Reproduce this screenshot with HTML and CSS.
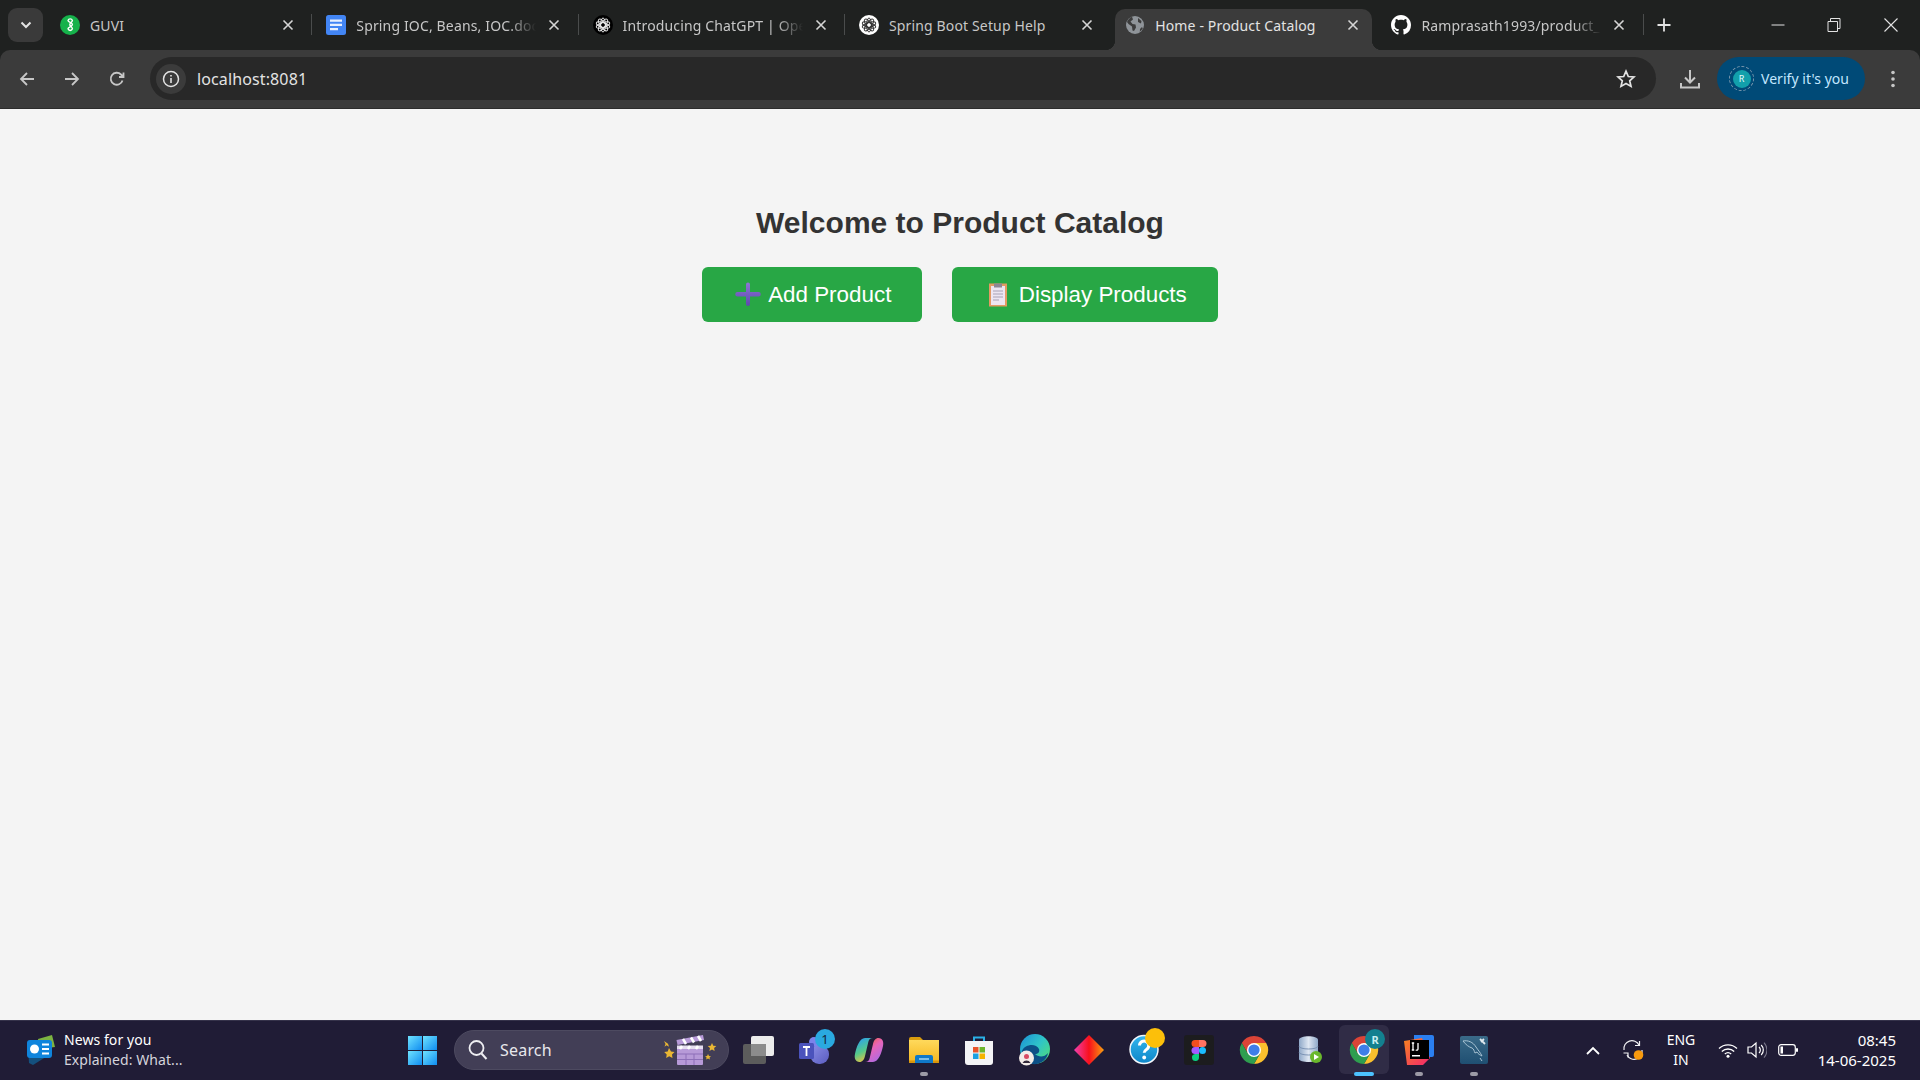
FILE: index.html
```html
<!DOCTYPE html>
<html lang="en">
<head>
<meta charset="utf-8">
<title>Home - Product Catalog</title>
<link rel="stylesheet" href="styles.css">
</head>
<body>
<svg class="defs" width="0" height="0" aria-hidden="true">
  <defs>
    <symbol id="x" viewBox="0 0 12 12"><path d="M1.500 1.500l9 9M10.500 1.500l-9 9" fill="none" stroke="currentColor" stroke-width="1.600"/></symbol>
    <symbol id="knot" viewBox="0 0 20 20">
      <g fill="none" stroke="currentColor" stroke-width="1">
        <ellipse cx="10" cy="10" rx="2.400" ry="7"/>
        <ellipse cx="10" cy="10" rx="2.400" ry="7" transform="rotate(36 10 10)"/>
        <ellipse cx="10" cy="10" rx="2.400" ry="7" transform="rotate(72 10 10)"/>
        <ellipse cx="10" cy="10" rx="2.400" ry="7" transform="rotate(108 10 10)"/>
        <ellipse cx="10" cy="10" rx="2.400" ry="7" transform="rotate(144 10 10)"/>
      </g>
    </symbol>
    <symbol id="chrome" viewBox="0 0 32 32">
      <path d="M3 8.500A15 15 0 0 1 29 8.500H16L9.500 19.750Z" fill="#db4437"/>
      <path d="M29 8.500A15 15 0 0 1 16 31L22.500 19.750L16 8.500Z" fill="#fbc02d"/>
      <path d="M16 31A15 15 0 0 1 3 8.500L9.500 19.750L22.500 19.750Z" fill="#2e9e4f"/>
      <circle cx="16" cy="16" r="7.500" fill="#fff"/>
      <circle cx="16" cy="16" r="6" fill="#3f7ee8"/>
    </symbol>
    <linearGradient id="win" x1="0" y1="0" x2="1" y2="1"><stop offset="0" stop-color="#6fe3ff"/><stop offset="1" stop-color="#0f8cf0"/></linearGradient>
    <linearGradient id="tm" x1="0" y1="0" x2="1" y2="1"><stop offset="0" stop-color="#8b8fe8"/><stop offset="1" stop-color="#5a5cc0"/></linearGradient>
    <linearGradient id="cp1" x1="0.2" y1="0" x2="0.6" y2="1"><stop offset="0" stop-color="#2a9ff0"/><stop offset="0.55" stop-color="#55c98a"/><stop offset="1" stop-color="#f2c23e"/></linearGradient>
    <linearGradient id="cp2" x1="0.2" y1="0" x2="0.8" y2="1"><stop offset="0" stop-color="#f0603c"/><stop offset="0.4" stop-color="#e865b8"/><stop offset="1" stop-color="#a86be8"/></linearGradient>
    <linearGradient id="fold" x1="0" y1="0" x2="0" y2="1"><stop offset="0" stop-color="#ffd95c"/><stop offset="1" stop-color="#f5b71f"/></linearGradient>
    <linearGradient id="edge" x1="0" y1="0" x2="1" y2="0.8"><stop offset="0" stop-color="#1b8fd6"/><stop offset="0.55" stop-color="#2fc4c8"/><stop offset="1" stop-color="#4fdc7c"/></linearGradient>
    <linearGradient id="dia" x1="0" y1="0.5" x2="1" y2="0.5"><stop offset="0" stop-color="#f040b0"/><stop offset="0.5" stop-color="#f8101c"/><stop offset="1" stop-color="#f8a010"/></linearGradient>
    <linearGradient id="ij" x1="0" y1="0" x2="1" y2="1"><stop offset="0" stop-color="#f5851f"/><stop offset="1" stop-color="#f5266e"/></linearGradient>
    <linearGradient id="db" x1="0" y1="0" x2="1" y2="0"><stop offset="0" stop-color="#8fa8c8"/><stop offset="0.5" stop-color="#dfe7f2"/><stop offset="1" stop-color="#8fa8c8"/></linearGradient>
    <linearGradient id="wb" x1="0" y1="0" x2="0" y2="1"><stop offset="0" stop-color="#3a6a88"/><stop offset="1" stop-color="#1f4f72"/></linearGradient>
    <linearGradient id="hp" x1="0" y1="0" x2="0" y2="1"><stop offset="0" stop-color="#33b6ee"/><stop offset="1" stop-color="#0e86c8"/></linearGradient>
    <linearGradient id="pl" x1="0" y1="0" x2="0" y2="1"><stop offset="0" stop-color="#8f74d6"/><stop offset="1" stop-color="#5d48ae"/></linearGradient>
  </defs>
</svg>

<header class="chrome">
  <div class="tabstrip">
    <button class="tab-search" type="button">
      <svg width="12" height="8" viewBox="0 0 12 8"><path d="M1.500 1.500L6 6l4.500-4.500" fill="none" stroke="#e3e3e3" stroke-width="2"/></svg>
    </button>
    <div class="tab">
      <svg class="fav" viewBox="0 0 20 20"><circle cx="10" cy="10" r="10" fill="#16b24b"/><path d="M8 5.500a2.300 2.300 0 0 1 4.400 0c0 1.500-2.600 2-2.600 4.300 0 2 2.600 2 2.600 4a2.300 2.300 0 0 1-4.400 0c0-1.700 4.400-2.300 4.400-4.300S8 7.200 8 5.500z" fill="none" stroke="#fff" stroke-width="1.400"/></svg>
      <span class="title">GUVI</span>
      <svg class="close"><use href="#x"/></svg>
    </div>
    <i class="sep"></i>
    <div class="tab">
      <svg class="fav" viewBox="0 0 20 20"><rect width="20" height="20" rx="2.500" fill="#4285f4"/><path d="M4 4.500h12v2.200H4zM4 8.800h12V11H4zM4 13h8v2.200H4z" fill="#e8f0fe"/></svg>
      <span class="title fade">Spring IOC, Beans, IOC.docx</span>
      <svg class="close"><use href="#x"/></svg>
    </div>
    <i class="sep"></i>
    <div class="tab">
      <svg class="fav" viewBox="0 0 20 20"><circle cx="10" cy="10" r="10" fill="#000"/><use href="#knot" class="knot-light"/></svg>
      <span class="title fade">Introducing ChatGPT | OpenAI</span>
      <svg class="close"><use href="#x"/></svg>
    </div>
    <i class="sep"></i>
    <div class="tab">
      <svg class="fav" viewBox="0 0 20 20"><circle cx="10" cy="10" r="10" fill="#fff"/><use href="#knot" class="knot-dark"/></svg>
      <span class="title">Spring Boot Setup Help</span>
      <svg class="close"><use href="#x"/></svg>
    </div>
    <i class="sep sep-off"></i>
    <div class="tab tab-active">
      <svg class="fav fav-globe" viewBox="0 0 20 20"><circle cx="10" cy="10" r="9" fill="#8f9499"/><path d="M7 1.800l1 2.700-2.500 2 2 2.500 3 .5.500 3-2 3.500-1.500-.5-.5-4-3.500-2.500L2 7C3 4.500 5 2.500 7 1.800zM13 3l3.500 3-.5 2.500-3-1.500zM17 12l.8 1.500-3 3.500 .2-3z" fill="#3c3c3c"/></svg>
      <span class="title">Home - Product Catalog</span>
      <svg class="close"><use href="#x"/></svg>
    </div>
    <i class="sep sep-off"></i>
    <div class="tab">
      <svg class="fav" viewBox="0 0 16 16"><path fill="#fff" d="M8 0C3.580 0 0 3.580 0 8c0 3.540 2.290 6.530 5.470 7.590.4.070.55-.17.55-.38 0-.19-.01-.82-.01-1.490-2.010.37-2.530-.49-2.690-.94-.09-.23-.48-.94-.82-1.130-.28-.15-.68-.52-.01-.53.63-.01 1.080.58 1.230.82.72 1.210 1.870.87 2.330.66.07-.52.28-.87.51-1.070-1.780-.2-3.640-.89-3.640-3.950 0-.87.31-1.590.82-2.150-.08-.2-.36-1.020.08-2.120 0 0 .67-.21 2.200.82.64-.18 1.320-.27 2-.27.68 0 1.360.09 2 .27 1.530-1.040 2.200-.82 2.200-.82.44 1.100.16 1.920.08 2.120.51.56.82 1.270.82 2.150 0 3.070-1.870 3.750-3.650 3.950.29.25.54.73.54 1.480 0 1.070-.01 1.930-.01 2.200 0 .21.15.46.55.38A8.013 8.013 0 0 0 16 8c0-4.420-3.580-8-8-8z"/></svg>
      <span class="title fade">Ramprasath1993/product_catalog</span>
      <svg class="close"><use href="#x"/></svg>
    </div>
    <i class="sep"></i>
    <svg class="newtab" width="16" height="16" viewBox="0 0 16 16"><path d="M8 1.500v13M1.500 8h13" stroke="#e3e3e3" stroke-width="1.800"/></svg>
    <div class="winctl">
      <svg width="14" height="14" viewBox="0 0 14 14"><path d="M.5 7h13" stroke="#e3e3e3"/></svg>
      <svg width="14" height="16" viewBox="0 0 14 16"><path d="M1 4.500h9.500v10H1zM3.500 4.500V1.500H13v10h-2.500" fill="none" stroke="#e3e3e3"/></svg>
      <svg width="16" height="16" viewBox="0 0 16 16"><path d="M1.500 1.500l13 13M14.500 1.500l-13 13" stroke="#e3e3e3" stroke-width="1.100"/></svg>
    </div>
  </div>

  <div class="toolbar">
    <svg class="nav" viewBox="0 0 18 18"><path d="M16 9H3M9 3L3 9l6 6" fill="none" stroke="#c7c7c7" stroke-width="1.800"/></svg>
    <svg class="nav" viewBox="0 0 18 18"><path d="M2 9h13M9 3l6 6-6 6" fill="none" stroke="#c7c7c7" stroke-width="1.800"/></svg>
    <svg class="nav" viewBox="0 0 18 18"><path d="M14.500 10.500A6 6 0 1 1 13 4.500L15 6.500M15.500 2.500v4.500H11" fill="none" stroke="#c7c7c7" stroke-width="1.800"/></svg>
    <div class="omnibox">
      <span class="site-info">
        <svg width="18" height="18" viewBox="0 0 18 18"><circle cx="9" cy="9" r="7.500" fill="none" stroke="#e3e3e3" stroke-width="1.500"/><path d="M9 8v5M9 5v1.600" stroke="#e3e3e3" stroke-width="1.600"/></svg>
      </span>
      <span class="url">localhost:8081</span>
      <svg class="star" width="20" height="20" viewBox="0 0 20 20"><path d="M10 2.200l2.300 5.300 5.700.5-4.300 3.800 1.300 5.600L10 14.500l-5 2.900 1.300-5.600L2 8l5.700-.5z" fill="none" stroke="#e3e3e3" stroke-width="1.700"/></svg>
    </div>
    <svg class="download" width="22" height="22" viewBox="0 0 22 22"><path d="M11 2v12M6 9.500l5 5 5-5M2 15v4.500h18V15" fill="none" stroke="#c7c7c7" stroke-width="2"/></svg>
    <div class="verify">
      <span class="ring"><span class="avatar">R</span></span>
      <span class="verify-text">Verify it's you</span>
    </div>
    <svg class="menu" width="4" height="18" viewBox="0 0 4 18"><circle cx="2" cy="2.500" r="1.800" fill="#c7c7c7"/><circle cx="2" cy="9" r="1.800" fill="#c7c7c7"/><circle cx="2" cy="15.500" r="1.800" fill="#c7c7c7"/></svg>
  </div>
</header>

<main class="page">
  <h1 class="heading">Welcome to Product Catalog</h1>
  <div class="actions">
    <a class="btn btn-add">
      <svg class="emoji" viewBox="0 0 30 30"><path d="M13 4.500a1.800 1.800 0 0 1 4 0V12h8.500a1.800 1.800 0 0 1 0 4.500H17V24a1.800 1.800 0 0 1-4 0v-7.500H4.500a1.800 1.800 0 0 1 0-4.500H13z" fill="url(#pl)"/></svg>Add Product
    </a>
    <a class="btn btn-list">
      <svg class="emoji" viewBox="0 0 30 30"><rect x="6" y="3.500" width="18" height="23" fill="#e39a63"/><rect x="8" y="6" width="14" height="19" fill="#ece6f2"/><rect x="11" y="3.500" width="8" height="4" fill="#8d8794"/><path d="M10 11h10M10 14h10M10 17h10M10 20h6" stroke="#a8a2b4" stroke-width="1"/></svg>Display Products
    </a>
  </div>
</main>

<footer class="taskbar">
  <div class="news">
    <svg width="30" height="30" viewBox="0 0 30 30">
      <path d="M13 4L27 0l3 12-16 2z" fill="#7cb342"/>
      <path d="M3 12l21 8-16 10-4-2z" fill="#14507e"/>
      <rect x="2" y="5" width="25" height="18" rx="3" fill="#0f84dc"/>
      <circle cx="9.500" cy="14" r="4.500" fill="#fff"/>
      <path d="M17 9.500h7M17 14h7M17 18.500h7" stroke="#fff" stroke-width="2"/>
    </svg>
    <div class="news-text">
      <span class="news-a">News for you</span>
      <span class="news-b">Explained: What...</span>
    </div>
  </div>
  <svg class="start" width="29" height="29" viewBox="0 0 29 29">
    <rect width="14" height="14" fill="url(#win)"/><rect x="15" width="14" height="14" fill="url(#win)"/>
    <rect y="15" width="14" height="14" fill="url(#win)"/><rect x="15" y="15" width="14" height="14" fill="url(#win)"/>
  </svg>
  <div class="search">
    <svg width="20" height="22" viewBox="0 0 20 22"><circle cx="8.500" cy="9" r="7" fill="none" stroke="#eeeef2" stroke-width="1.800"/><path d="M13.500 14.500L18.500 20" stroke="#eeeef2" stroke-width="2"/></svg>
    <span class="search-text">Search</span>
    <svg class="clapper" width="56" height="30" viewBox="0 0 56 30">
      <path d="M2 6l1.500 3-1 2.800 2-1.500 2.500 1.500-1-3z" fill="#e9b634"/>
      <path d="M7 13l2 3.500 3.500.5-2.500 2.500.500 3.500-3.300-1.700-3 1.700.5-3.500-2.500-2.500 3.500-.5z" fill="#e9b634"/>
      <path d="M50 8l1.300 2.800 3 .3-2.200 2 .5 3-2.600-1.500-2.600 1.500.6-3-2.300-2 3-.3z" fill="#e9b634"/>
      <path d="M46 19l1 2 2 .2-1.500 1.400.4 2-1.900-1-1.800 1 .4-2-1.500-1.400 2-.2z" fill="#e9b634"/>
      <rect x="15" y="11" width="26" height="19" rx="1" fill="#b79ad8"/>
      <path d="M15 19h26M15 24.500h26M24 19v11M32 19v11" stroke="#8d6fb8" stroke-width="1"/>
      <path d="M14.500 5L41 0l1 5-26.500 5z" fill="#b79ad8"/>
      <path d="M15 10.500h26v3.500H15z" fill="#e6def0"/>
      <path d="M21 4l3 5M29 2.500l3 5M36 1l3 5M20 11l-2 3M28 11l-2 3M36 11l-2 3" stroke="#fff" stroke-width="2.500"/>
    </svg>
  </div>
  <div class="apps">
    <div class="app">
      <svg width="32" height="32" viewBox="0 0 32 32"><rect x="0" y="10" width="23" height="20" rx="2" fill="#5c5c5c"/><rect x="8" y="2" width="23" height="20" rx="2" fill="#ececec"/><rect x="8" y="10" width="15" height="12" fill="#8c8c8c"/></svg>
    </div>
    <div class="app">
      <svg width="32" height="32" viewBox="0 0 32 32"><circle cx="24" cy="11" r="5" fill="#7b83eb"/><rect x="12" y="11" width="19" height="19" rx="9" fill="url(#tm)"/><circle cx="16" cy="8" r="5" fill="#7b83eb"/><rect x="1" y="9" width="15" height="16" rx="1.500" fill="#4b53bc"/><path d="M5 13h7M8.500 13v9" stroke="#fff" stroke-width="1.800"/></svg>
      <span class="badge badge-teams">1</span>
    </div>
    <div class="app">
      <svg width="30" height="30" viewBox="0 0 30 30"><path d="M19 27h-8c3 0 4-1.500 4.700-4L19 9c.8-3.500 2.500-6 5.500-6 4 0 5.500 4 4.500 8-1.500 7-4.500 16-10 16z" fill="url(#cp2)"/><path d="M11 3h8c-3 0-4 1.500-4.700 4L11 21c-.8 3.500-2.500 6-5.500 6C1.500 27 0 23 1 19 2.500 12 5.500 3 11 3z" fill="url(#cp1)"/></svg>
    </div>
    <div class="app has-pin">
      <svg width="32" height="28" viewBox="0 0 32 28"><path d="M1 3a2 2 0 0 1 2-2h9l3 3h-14z" fill="#d99c0e"/><path d="M1 4h30v22a1 1 0 0 1-1 1H2a1 1 0 0 1-1-1z" fill="url(#fold)"/><path d="M1 24.500h30V26a1 1 0 0 1-1 1H2a1 1 0 0 1-1-1z" fill="#d9960c"/><path d="M7 27v-6a2 2 0 0 1 2-2h14a2 2 0 0 1 2 2v6z" fill="#0f78c8"/><path d="M11 23h10" stroke="#9fd4f5" stroke-width="1.500"/></svg>
      <i class="pin"></i>
    </div>
    <div class="app">
      <svg width="30" height="30" viewBox="0 0 30 30"><path d="M10 6V2.500h10V6" fill="none" stroke="#2ab0e6" stroke-width="2"/><path d="M1 6h28v21a3 3 0 0 1-3 3H4a3 3 0 0 1-3-3z" fill="#f4f4f6"/><rect x="9" y="12" width="5.500" height="5.500" fill="#e8542a"/><rect x="15.500" y="12" width="5.500" height="5.500" fill="#6cb52d"/><rect x="9" y="18.500" width="5.500" height="5.500" fill="#1ba1e2"/><rect x="15.500" y="18.500" width="5.500" height="5.500" fill="#f4b400"/></svg>
    </div>
    <div class="app">
      <svg width="32" height="32" viewBox="0 0 32 32"><circle cx="17" cy="15" r="15" fill="url(#edge)"/><path d="M4 17c3-7 14-8 17-2 1 3-1 5-4 5 3 3 9 4 13-1-1 7-8 12-16 11C8 29 3 24 4 17z" fill="#0c4f86"/><circle cx="8.500" cy="24" r="7.500" fill="#f3ece8"/><circle cx="8.500" cy="22.500" r="2.500" fill="#d84b63"/><path d="M4.500 29a4.500 4.500 0 0 1 8 0z" fill="#33293a"/></svg>
    </div>
    <div class="app">
      <svg width="30" height="30" viewBox="0 0 30 30"><path d="M15 0l15 15-15 15L0 15z" fill="url(#dia)"/></svg>
    </div>
    <div class="app">
      <svg width="32" height="32" viewBox="0 0 32 32"><circle cx="16" cy="15.500" r="14" fill="url(#hp)" stroke="#f2f6fa" stroke-width="1.500"/><path d="M11.500 11.500a4.600 4.600 0 1 1 7 4c-1.500 1-2.300 1.800-2.300 3.300" fill="none" stroke="#fff" stroke-width="3"/><circle cx="16.200" cy="23.500" r="1.900" fill="#fff"/></svg>
      <span class="badge badge-help"></span>
    </div>
    <div class="app">
      <svg width="30" height="30" viewBox="0 0 30 30"><rect width="30" height="30" rx="3" fill="#1c1c1e"/><path d="M11 5h4v7h-4a3.500 3.500 0 0 1 0-7z" fill="#f24e1e"/><path d="M15 5h4a3.500 3.500 0 0 1 0 7h-4z" fill="#ff7262"/><path d="M11 12h4v7h-4a3.500 3.500 0 0 1 0-7z" fill="#a259ff"/><circle cx="18.500" cy="15.500" r="3.500" fill="#1abcfe"/><path d="M11 19h4v3.500a3.500 3.500 0 1 1-4-3.500z" fill="#0acf83"/></svg>
    </div>
    <div class="app">
      <svg width="30" height="30"><use href="#chrome"/></svg>
    </div>
    <div class="app">
      <svg width="26" height="28" viewBox="0 0 26 28"><path d="M3 4c0-5 19-5 19 0v19c0 4-19 4-19 0z" fill="url(#db)"/><path d="M3 10c0 4 19 4 19 0M3 16c0 4 19 4 19 0" fill="none" stroke="#7d94b5" stroke-width="1"/><circle cx="20" cy="21" r="6" fill="#6ab82c"/><path d="M18 18l5 3-5 3z" fill="#fff"/></svg>
    </div>
    <div class="app app-on">
      <svg class="on-ic" width="30" height="30"><use href="#chrome"/></svg>
      <span class="badge badge-r">R</span>
      <i class="pin pin-on"></i>
    </div>
    <div class="app has-pin">
      <svg width="30" height="30" viewBox="0 0 30 30"><path d="M10 0h18a2 2 0 0 1 2 2v18a2 2 0 0 1-2 2H10z" fill="#2b7ff0"/><path d="M0 6l18-3 8 20-7 7H3z" fill="url(#ij)"/><rect x="6" y="5" width="19" height="19" fill="#000"/><rect x="8" y="20" width="8" height="1.500" fill="#fff"/><path d="M9 8v7M7.800 8h2.400M7.800 15h2.400M14 8v6c0 1-1 1.500-2.300 1" fill="none" stroke="#fff" stroke-width="1.300"/></svg>
      <i class="pin"></i>
    </div>
    <div class="app has-pin">
      <svg width="28" height="28" viewBox="0 0 28 28"><rect width="28" height="28" rx="2" fill="url(#wb)"/><path d="M3 5c5-1 10 1 13 6 2 3 4 5 6 9-2-1-4-2-5-4l-2 1c-1-2-1-4-3-5-3-1-6-3-9-7z" fill="none" stroke="#a9c4d4" stroke-width="1"/><path d="M20 3l5 5M24 3l-3 3" stroke="#dfe9ee" stroke-width="1.800"/><path d="M20 22l2 3" stroke="#a9c4d4"/></svg>
      <i class="pin"></i>
    </div>
  </div>
  <div class="tray">
    <span class="tr tr-chev"><svg width="14" height="9" viewBox="0 0 14 9"><path d="M1 8l6-6 6 6" fill="none" stroke="#fff" stroke-width="1.800"/></svg></span>
    <span class="tr tr-sync"><svg width="22" height="22" viewBox="0 0 22 22"><path d="M2 11A8 8 0 0 1 17 6M20 11A8 8 0 0 1 5 16" fill="none" stroke="#f2f2f4" stroke-width="1.200"/><path d="M17.500 2v4.500H13M1.500 14H6v4.500" fill="none" stroke="#f2f2f4" stroke-width="1.200"/><circle cx="16.500" cy="16" r="4.800" fill="#f79a0e"/></svg></span>
    <span class="tr tr-lang"><span>ENG</span><span>IN</span></span>
    <span class="tr tr-wifi"><svg width="20" height="15" viewBox="0 0 20 15"><path d="M1 5.500a13 13 0 0 1 18 0M3.800 8.500a9 9 0 0 1 12.400 0M6.800 11a5 5 0 0 1 6.400 0" fill="none" stroke="#fff" stroke-width="1.300"/><circle cx="10" cy="13.300" r="1.500" fill="#fff"/></svg></span>
    <span class="tr tr-vol"><svg width="20" height="18" viewBox="0 0 20 18"><path d="M1 6h3.500L9 2v14l-4.500-4H1z" fill="none" stroke="#fff" stroke-width="1.200"/><path d="M12 6a4 4 0 0 1 0 6M14.200 4a7 7 0 0 1 0 10" fill="none" stroke="#fff" stroke-width="1.200"/><path d="M17 1.500a11 11 0 0 1 0 15" fill="none" stroke="#777588" stroke-width="1.100"/></svg></span>
    <span class="tr tr-bat"><svg width="20" height="12" viewBox="0 0 20 12"><rect x=".7" y=".7" width="16.600" height="10.600" rx="2.500" fill="none" stroke="#fff" stroke-width="1.200"/><rect x="2.500" y="2.500" width="2.500" height="7" fill="#fff"/><rect x="18" y="4" width="2" height="4" rx="1" fill="#fff"/></svg></span>
    <span class="clock"><span>08:45</span><span>14-06-2025</span></span>
  </div>
</footer>
</body>
</html>
```

FILE: styles.css
```css
* { box-sizing: border-box; }
html, body { margin: 0; height: 100%; }
body {
  display: flex;
  flex-direction: column;
  height: 100vh;
  overflow: hidden;
  background: #f4f4f4;
  font-family: "Noto Sans", "Open Sans", sans-serif;
}
.defs { position: absolute; }

/* ---- browser chrome ---- */
.chrome { flex: none; background: #1f2120; }
.tabstrip {
  display: flex;
  align-items: flex-end;
  height: 50px;
  padding-left: 8px;
}
.tab-search {
  flex: none;
  width: 35px;
  height: 34px;
  margin: 0 3px 8px 0;
  padding: 0;
  border: 0;
  border-radius: 9px;
  background: #3a3a3a;
  display: flex;
  align-items: center;
  justify-content: center;
}
.tab {
  position: relative;
  flex: none;
  width: 265.3px;
  height: 41px;
  padding: 0 0 9px 14px;
  display: flex;
  align-items: center;
  color: #c7c7c7;
  font-size: 14px;
}
.fav { flex: none; width: 20px; height: 20px; margin-right: 10px; }
.title {
  flex: none;
  width: 180px;
  overflow: hidden;
  white-space: nowrap;
  letter-spacing: 0.15px;
}
.title.fade {
  -webkit-mask-image: linear-gradient(to right, #000 85%, transparent 100%);
  mask-image: linear-gradient(to right, #000 85%, transparent 100%);
}
.close { flex: none; width: 12px; height: 12px; margin-left: 12px; color: #d5d5d5; }
.knot-light { color: #e8e8e8; }
.knot-dark { color: #333; }
.sep {
  flex: none;
  width: 1px;
  height: 21px;
  margin-bottom: 15px;
  background: #4a4c4c;
}
.sep-off { background: transparent; }
.tab-active {
  color: #e3e3e3;
  background: #3b3b3b;
  border-radius: 10px 10px 0 0;
  margin: 0 4px;
  width: 257.3px;
  padding-left: 10px;
}
.tab-active::before,
.tab-active::after {
  content: "";
  position: absolute;
  bottom: 0;
  width: 10px;
  height: 10px;
}
.tab-active::before {
  left: -10px;
  background: radial-gradient(circle at 0 0, transparent 10px, #3b3b3b 10.5px);
}
.tab-active::after {
  right: -10px;
  background: radial-gradient(circle at 100% 0, transparent 10px, #3b3b3b 10.5px);
}
.newtab { flex: none; margin: 0 0 17px 12px; }
.winctl {
  margin-left: auto;
  width: 128px;
  margin-right: 21px;
  height: 50px;
  display: flex;
  align-items: center;
  justify-content: space-between;
}

.toolbar {
  display: flex;
  align-items: center;
  height: 59px;
  padding: 0 0 1px 18px;
  background: #3b3b3b;
  border-radius: 10px 10px 0 0;
  border-bottom: 1px solid #2c2c2c;
}
.nav { flex: none; width: 18px; height: 18px; margin-right: 27px; }
.nav:nth-of-type(3) { margin-right: 24px; }
.omnibox {
  flex: none;
  width: 1506px;
  height: 43px;
  border-radius: 22px;
  background: #282828;
  display: flex;
  align-items: center;
  padding: 0 20px 0 6px;
}
.site-info {
  width: 30px;
  height: 30px;
  border-radius: 50%;
  background: #3b3b3b;
  display: flex;
  align-items: center;
  justify-content: center;
  margin-right: 11px;
}
.url { color: #e3e3e3; font-size: 16px; letter-spacing: 0.12px; }
.star { margin-left: auto; }
.download { flex: none; margin-left: 23px; }
.verify {
  flex: none;
  width: 147.5px;
  height: 43px;
  margin-left: 16px;
  border-radius: 22px;
  background: #004a77;
  color: #c2e7ff;
  display: flex;
  align-items: center;
  padding-left: 12px;
  font-size: 14px;
}
.ring {
  width: 25px;
  height: 25px;
  border-radius: 50%;
  border: 1.500px dashed #7f9bb0;
  display: flex;
  align-items: center;
  justify-content: center;
  margin-right: 7px;
}
.avatar {
  width: 18px;
  height: 18px;
  border-radius: 50%;
  background: #12a0ab;
  color: #e6fbfd;
  font-size: 9px;
  display: flex;
  align-items: center;
  justify-content: center;
}
.verify-text { letter-spacing: 0.05px; }
.menu { flex: none; margin-left: 26px; }

/* ---- page ---- */
.page { flex: 1; padding-top: 97px; text-align: center; }
.heading {
  margin: 0 0 27px;
  color: #333;
  font: bold 30px/34px "Liberation Sans", Arial, sans-serif;
}
.actions { display: flex; justify-content: center; gap: 30px; }
.btn {
  display: flex;
  align-items: center;
  justify-content: center;
  height: 55px;
  border-radius: 6px;
  background: #28a745;
  color: #fff;
  font: 22.4px "Liberation Sans", Arial, sans-serif;
}
.btn-add { width: 220px; }
.btn-list { width: 266px; }
.emoji { flex: none; width: 30px; height: 30px; margin-right: 5.5px; }

/* ---- taskbar ---- */
.taskbar {
  flex: none;
  height: 60px;
  display: flex;
  align-items: center;
  background: #201c36;
  box-shadow: inset 0 1px 0 #35324a;
}
.news {
  flex: none;
  width: 408px;
  padding-left: 25px;
  display: flex;
  align-items: center;
  gap: 9px;
}
.news-text { display: flex; flex-direction: column; font-size: 14px; line-height: 20px; letter-spacing: 0.07px; margin-top: -1px; }
.news-a { color: #fff; }
.news-b { color: #d5d4dc; }
.start { flex: none; margin-right: 17px; }
.search {
  flex: none;
  width: 275px;
  height: 40px;
  margin-right: 2.500px;
  border-radius: 20px;
  background: #423e56;
  border: 1px solid #4d4a60;
  display: flex;
  align-items: center;
  padding-left: 13px;
}
.search-text { margin-left: 12px; color: #e8e8ec; font-size: 16px; letter-spacing: 0.2px; }
.clapper { margin-left: auto; margin-right: 10px; }
.apps { flex: none; display: flex; }
.app {
  position: relative;
  isolation: isolate;
  width: 55px;
  height: 60px;
  display: flex;
  align-items: center;
  justify-content: center;
}
.app-on::before {
  content: "";
  position: absolute;
  z-index: -1;
  top: 5px;
  bottom: 6px;
  left: 2.500px;
  right: 2.500px;
  border-radius: 6px;
  background: #302c46;
}
.pin {
  position: absolute;
  left: 50%;
  bottom: 4px;
  width: 8px;
  height: 4px;
  margin-left: -4px;
  border-radius: 2px;
  background: #9c9aa6;
}
.pin-on { width: 20px; margin-left: -10px; background: #4cc2ff; }
.badge {
  position: absolute;
  left: 28.5px;
  width: 20px;
  height: 20px;
  border-radius: 50%;
  display: flex;
  align-items: center;
  justify-content: center;
  font-size: 13px;
}
.badge-teams { top: 9px; background: #2aa9e0; color: #14233a; }
.badge-help { top: 8px; background: #fcbf0a; }
.badge-r { top: 9px; background: #13808f; color: #c9eef2; font-weight: 700; font-size: 11px; }

.tray {
  flex: none;
  margin-left: auto;
  margin-right: 24px;
  width: 321px;
  display: flex;
  align-items: center;
  color: #fff;
  font-size: 14px;
}
.tr { flex: none; display: flex; align-items: center; justify-content: center; }
.tr-chev { width: 36px; }
.tr-sync { width: 44px; }
.tr-lang { width: 52px; margin-right: 6px; flex-direction: column; line-height: 20px; }
.tr-wifi { width: 30px; }
.tr-vol { width: 28px; }
.tr-bat { width: 34px; }
.clock { flex: 1; display: flex; flex-direction: column; align-items: flex-end; font-size: 15px; line-height: 20px; margin-top: -1px; }
```
